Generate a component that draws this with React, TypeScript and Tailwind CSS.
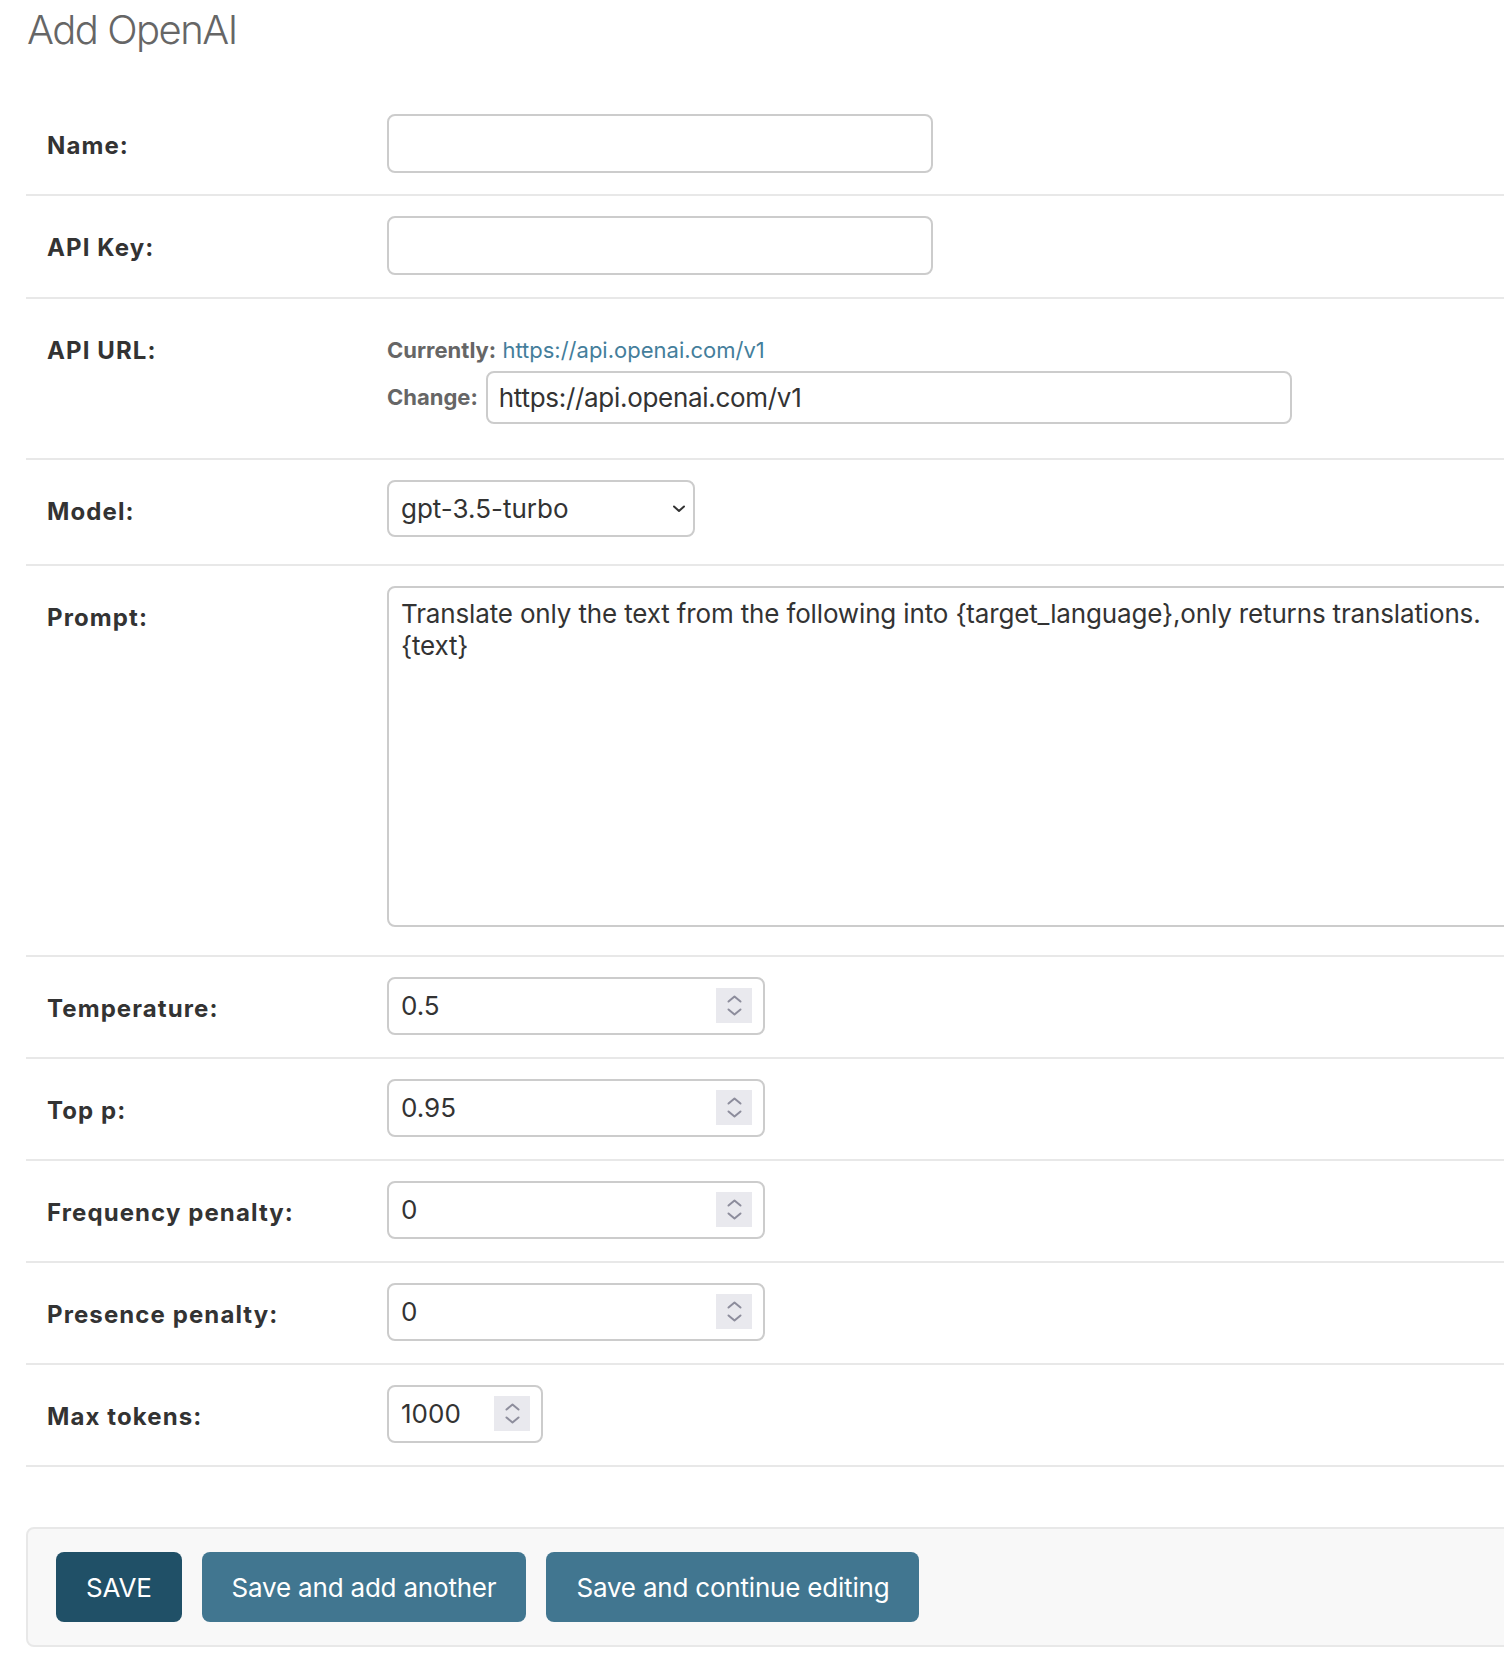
import React from "react";

const font = { fontFamily: "Inter, 'Noto Sans', sans-serif" };

function Spinner() {
  return (
    <div className="absolute right-[11px] top-[9px] flex h-[35px] w-[36px] flex-col items-center justify-center gap-[5px] bg-[#e9e9ee]">
      <svg width="15" height="8" viewBox="0 0 15 8" fill="none">
        <path d="M1.5 6.5L7.5 1.5L13.5 6.5" stroke="#8d8d9c" strokeWidth="2" strokeLinecap="round" strokeLinejoin="round" />
      </svg>
      <svg width="15" height="8" viewBox="0 0 15 8" fill="none">
        <path d="M1.5 1.5L7.5 6.5L13.5 1.5" stroke="#8d8d9c" strokeWidth="2" strokeLinecap="round" strokeLinejoin="round" />
      </svg>
    </div>
  );
}

function Label({ children }: { children: React.ReactNode }) {
  return (
    <div className="mt-[16px] h-[31px] w-[340px] shrink-0 text-[24px] font-bold leading-[31px] tracking-[1.1px] text-[#333333]">
      {children}
    </div>
  );
}

function NumberField({ value, wide }: { value: string; wide: boolean }) {
  return (
    <div
      className={
        wide
          ? "relative h-[58px] w-[378px] rounded-[8px] border-2 border-[#cccccc] bg-white"
          : "relative h-[58px] w-[156px] rounded-[8px] border-2 border-[#cccccc] bg-white"
      }
    >
      <div className="pl-[12px] text-[26px] leading-[54px] text-[#333333]">{value}</div>
      <Spinner />
    </div>
  );
}

export default function App() {
  return (
    <div className="min-h-[1658px] w-[1504px] overflow-hidden bg-white" style={font}>
      <div className="pl-[26px]">
        <h1 className="mt-[6px] pl-px text-[40px] font-light leading-[48px] tracking-[-1.5px] text-[#666666]">
          Add OpenAI
        </h1>

        <div className="mt-[40px] w-[1600px]">
          {/* Name */}
          <div className="flex border-b-2 border-[#e8e8e8] pb-[21px] pl-[21px] pt-[20px]">
            <Label>Name:</Label>
            <div className="h-[59px] w-[546px] rounded-[8px] border-2 border-[#cccccc] bg-white" />
          </div>

          {/* API Key */}
          <div className="flex border-b-2 border-[#e8e8e8] pb-[22px] pl-[21px] pt-[20px]">
            <Label>API Key:</Label>
            <div className="h-[59px] w-[546px] rounded-[8px] border-2 border-[#cccccc] bg-white" />
          </div>

          {/* API URL */}
          <div className="flex border-b-2 border-[#e8e8e8] pb-[34px] pl-[21px] pt-[20px]">
            <Label>API URL:</Label>
            <div className="flex flex-col">
              <div className="mt-[16px] h-[31px] text-[22px] leading-[31px]">
                <span className="font-bold text-[#666666]">Currently:</span>{" "}
                <span className="text-[#447e9b]">https://api.openai.com/v1</span>
              </div>
              <div className="mt-[5px] flex items-center gap-[8px]">
                <span className="text-[22px] font-bold text-[#666666]">Change:</span>
                <div className="h-[53px] w-[806px] rounded-[8px] border-2 border-[#cccccc] bg-white pl-[11px] text-[26px] leading-[49px] tracking-[-0.3px] text-[#333333]">
                  https://api.openai.com/v1
                </div>
              </div>
            </div>
          </div>

          {/* Model */}
          <div className="flex border-b-2 border-[#e8e8e8] pb-[27px] pl-[21px] pt-[20px]">
            <Label>Model:</Label>
            <div className="flex h-[57px] w-[308px] items-center justify-between rounded-[8px] border-2 border-[#cccccc] bg-white pl-[12px] pr-[8px]">
              <span className="text-[26px] text-[#333333]">gpt-3.5-turbo</span>
              <svg width="12" height="8" viewBox="0 0 12 8" fill="none">
                <path d="M1 1.5L6 6L11 1.5" stroke="#333333" strokeWidth="2" strokeLinecap="round" strokeLinejoin="round" />
              </svg>
            </div>
          </div>

          {/* Prompt */}
          <div className="flex border-b-2 border-[#e8e8e8] pb-[28px] pl-[21px] pt-[20px]">
            <Label>Prompt:</Label>
            <div className="h-[341px] w-[1160px] rounded-[8px] border-2 border-[#cccccc] bg-white pl-[12px] pt-[10px] text-[26px] leading-[32px] tracking-[-0.15px] text-[#333333]">
              <div>Translate only the text from the following into {"{target_language}"},only returns translations.</div>
              <div>{"{text}"}</div>
            </div>
          </div>

          {/* Temperature */}
          <div className="flex border-b-2 border-[#e8e8e8] pb-[22px] pl-[21px] pt-[20px]">
            <Label>Temperature:</Label>
            <NumberField value="0.5" wide={true} />
          </div>

          {/* Top p */}
          <div className="flex border-b-2 border-[#e8e8e8] pb-[22px] pl-[21px] pt-[20px]">
            <Label>Top p:</Label>
            <NumberField value="0.95" wide={true} />
          </div>

          {/* Frequency penalty */}
          <div className="flex border-b-2 border-[#e8e8e8] pb-[22px] pl-[21px] pt-[20px]">
            <Label>Frequency penalty:</Label>
            <NumberField value="0" wide={true} />
          </div>

          {/* Presence penalty */}
          <div className="flex border-b-2 border-[#e8e8e8] pb-[22px] pl-[21px] pt-[20px]">
            <Label>Presence penalty:</Label>
            <NumberField value="0" wide={true} />
          </div>

          {/* Max tokens */}
          <div className="flex border-b-2 border-[#e8e8e8] pb-[22px] pl-[21px] pt-[20px]">
            <Label>Max tokens:</Label>
            <NumberField value="1000" wide={false} />
          </div>

          {/* Submit row */}
          <div className="mt-[60px] flex gap-[20px] rounded-l-[8px] border-2 border-[#e8e8e8] bg-[#f8f8f8] pb-[23px] pl-[28px] pt-[23px]">
            <button className="h-[70px] rounded-[8px] bg-[#205067] px-[30px] text-[26px] tracking-[-0.2px] text-white">SAVE</button>
            <button className="h-[70px] rounded-[8px] bg-[#417690] px-[30px] text-[26px] tracking-[-0.2px] text-white">Save and add another</button>
            <button className="h-[70px] rounded-[8px] bg-[#417690] px-[30px] text-[26px] tracking-[-0.2px] text-white">Save and continue editing</button>
          </div>
        </div>
      </div>
    </div>
  );
}
